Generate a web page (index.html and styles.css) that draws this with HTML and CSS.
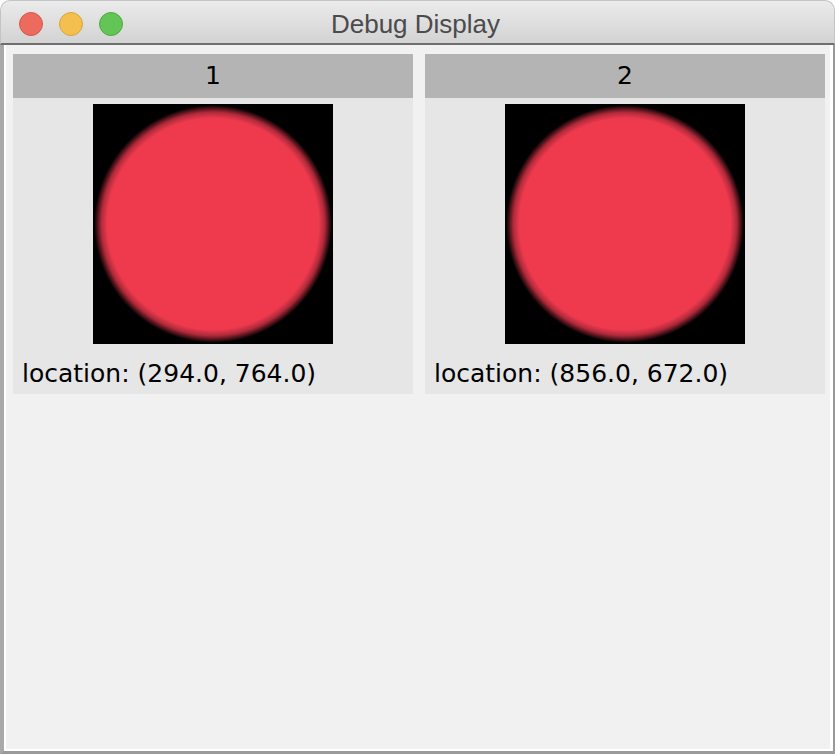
FILE: index.html
```html
<!DOCTYPE html>
<html>
<head>
<meta charset="utf-8">
<link rel="stylesheet" href="styles.css">
</head>
<body>
<div class="window">
  <div class="titlebar">
    <div class="lights">
      <span class="light red"></span>
      <span class="light yellow"></span>
      <span class="light green"></span>
    </div>
    <div class="title">Debug Display</div>
    <div></div>
  </div>
  <div class="frame">
    <div class="content">
      <div class="panel">
        <div class="panel-head">1</div>
        <div class="pic"><div class="blob"></div></div>
        <div class="loc">location: (294.0, 764.0)</div>
      </div>
      <div class="panel">
        <div class="panel-head">2</div>
        <div class="pic"><div class="blob"></div></div>
        <div class="loc">location: (856.0, 672.0)</div>
      </div>
    </div>
  </div>
</div>
</body>
</html>
```
FILE: styles.css
```css
html, body {
  margin: 0;
  padding: 0;
  background: #ffffff;
}
.window {
  width: 835px;
  height: 754px;
  display: flex;
  flex-direction: column;
}
.titlebar {
  height: 41px;
  padding-top: 1px;
  border: 1px solid #c4c4c4;
  border-bottom: 2px solid #6e6e6e;
  border-radius: 10px 10px 0 0;
  background: linear-gradient(#ebebeb, #d3d3d3);
  display: grid;
  grid-template-columns: 1fr auto 1fr;
  align-items: center;
}
.lights {
  display: flex;
  gap: 16px;
  padding-left: 18px;
}
.light {
  width: 22px;
  height: 22px;
  border-radius: 50%;
  display: block;
}
.red { background: #ec6a5e; border: 1px solid #d35a4e; }
.yellow { background: #f4bf4f; border: 1px solid #d8a53e; }
.green { background: #62c555; border: 1px solid #52a843; }
.title {
  font-family: "Liberation Sans", Arial, sans-serif;
  font-size: 26px;
  color: #4b4b4b;
  line-height: 41px;
  padding-top: 2px;
  padding-right: 4px;
}
.frame {
  flex: 1;
  display: flex;
  border-left: 4px solid #a9a9a9;
  border-right: 2px solid #9a9a9a;
  border-bottom: 3px solid #9a9a9a;
}
.content {
  flex: 1;
  background: #f1f1f1;
  border-left: 2px solid #ffffff;
  border-right: 3px solid #ffffff;
  border-bottom: 2px solid #ffffff;
  padding: 9px 5px 0 7px;
  display: flex;
  align-items: flex-start;
  gap: 12px;
}
.panel {
  width: 400px;
  background: #e6e6e6;
  font-family: "DejaVu Sans", Verdana, sans-serif;
  font-size: 25px;
  color: #000;
}
.panel-head {
  height: 44px;
  line-height: 44px;
  background: #b4b4b4;
  text-align: center;
}
.pic {
  display: flex;
  justify-content: center;
  padding-top: 6px;
}
.blob {
  width: 240px;
  height: 240px;
  background-color: #000;
  background-image: radial-gradient(circle closest-side, #ef3a4e 0, #ef3a4e 88%, #b02a3a 93%, #000 99%);
}
.loc {
  padding: 10px 0 0 9px;
  line-height: 40px;
  white-space: nowrap;
}
```
